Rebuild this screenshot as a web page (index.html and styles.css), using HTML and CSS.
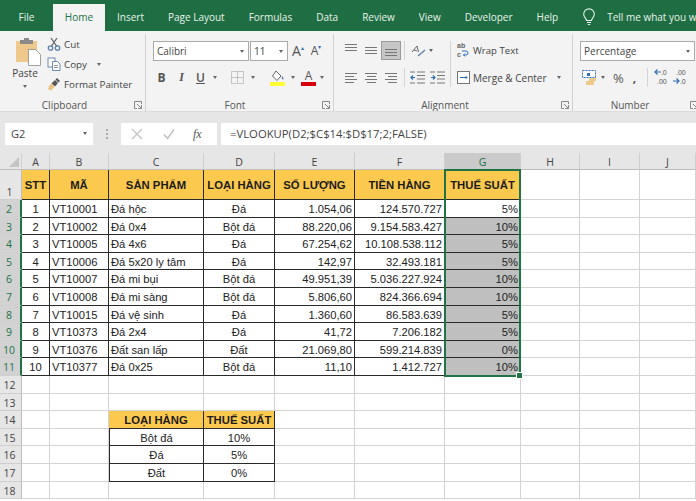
FILE: index.html
```html
<!DOCTYPE html>
<html lang="vi">
<head>
    <meta charset="UTF-8">
    <title>Excel - VLOOKUP</title>
    <link rel="stylesheet" href="styles.css">
</head>
<body>
    <!-- Tabs -->
    <div class="tabs">
        <a class="tab file">File</a>
        <a class="tab active">Home</a>
        <a class="tab">Insert</a>
        <a class="tab">Page Layout</a>
        <a class="tab">Formulas</a>
        <a class="tab">Data</a>
        <a class="tab">Review</a>
        <a class="tab">View</a>
        <a class="tab">Developer</a>
        <a class="tab">Help</a>
        <svg class="bulb" width="14" height="18" viewBox="0 0 14 18" fill="none" stroke="#e8f2ec" stroke-width="1.1"><path d="M4.500 12.500c0-2-2.800-3-2.800-6.300a5.300 5.300 0 0 1 10.600 0c0 3.300-2.800 4.300-2.800 6.300z"/><path d="M5 14.500h4M5.800 16.500h2.400"/></svg>
        <span class="tell">Tell me what you want to do</span>
    </div>

    <!-- Ribbon -->
    <div class="ribbon">
        <section class="group clipboard">
            <div class="group-body clip-body">
                <div class="paste">
                    <svg width="27" height="28" viewBox="0 0 27 28"><rect x="1" y="3" width="21" height="21" fill="#eec98b"/><rect x="5" y="2" width="13" height="4" fill="#8a8a8a"/><rect x="9" y="0" width="5" height="3" fill="#8a8a8a"/><path d="M13.500 11.500h7l5 5v11h-12z" fill="#fff" stroke="#8a8a8a" stroke-width=".8"/></svg>
                    <span>Paste</span>
                    <i class="caret"></i>
                </div>
                <div class="clip-list">
                    <div class="clip-item">
                        <svg width="14" height="14" viewBox="0 0 14 14" fill="none" stroke="#5b7fa8" stroke-width="1.300"><circle cx="3.500" cy="11" r="2.200"/><circle cx="10.500" cy="11" r="2.200"/><path d="M4.500 9 10 1M9.500 9 4 1" stroke="#666"/></svg>
                        <span>Cut</span>
                    </div>
                    <div class="clip-item">
                        <svg width="14" height="14" viewBox="0 0 14 14" fill="#fff" stroke="#5b7fa8" stroke-width=".9"><rect x="1" y="1" width="7" height="9"/><path d="M5.500 4.500h5l2.500 2.500v6.500h-7.500z"/><path d="M7 8.500h4M7 10.500h4" stroke="#888"/></svg>
                        <span>Copy</span>
                        <i class="caret copy-caret"></i>
                    </div>
                    <div class="clip-item">
                        <svg width="14" height="14" viewBox="0 0 14 14"><path d="M8 3l3 3-3 3.500-3.500-3z" fill="#555"/><path d="M10 1l3 3-1.500 1.500-3-3z" fill="#555"/><path d="M4.500 6.500l3 3.500-3.500 3.500-3.500-1.500 2-1.500-1.500-.5z" fill="#e8c27d"/></svg>
                        <span>Format Painter</span>
                    </div>
                </div>
            </div>
            <div class="group-name">Clipboard<svg class="launcher" width="8" height="8" viewBox="0 0 8 8" fill="none" stroke="#888"><path d="M7.500 3V.5H.5v7H3M3 3l4.500 4.500M4 7.500h3.500V4"/></svg></div>
        </section>

        <section class="group font">
            <div class="group-body">
                <div class="tool-row">
                    <div class="select font-name">Calibri<i class="caret"></i></div>
                    <div class="select font-size">11<i class="caret"></i></div>
                    <span class="grow-a big">A<sup>▴</sup></span>
                    <span class="grow-a small">A<sup>▾</sup></span>
                </div>
                <div class="tool-row second">
                    <span class="fmt bold">B</span>
                    <span class="fmt italic">I</span>
                    <span class="fmt under">U</span>
                    <i class="caret u-caret"></i>
                    <svg class="borders" width="13" height="13" viewBox="0 0 13 13" fill="none" stroke="#999" stroke-dasharray="1 1"><path d="M.5.500h12v12H.5zM6.500.500v12M.5 6.500h12"/></svg>
                    <i class="caret b-caret"></i>
                    <svg class="fill-icon" width="16" height="16" viewBox="0 0 16 16"><path d="M6 1l5 5-4 4.500-4.500-4.500z" fill="#fff" stroke="#666"/><path d="M12 6c1.500 1.500 2 3 1 3.500s-1.500-1.500-1-3.500z" fill="#5b7fa8"/><rect x="0" y="12" width="15" height="4" fill="#ffff33"/></svg>
                    <i class="caret f-caret"></i>
                    <div class="color-a">A</div>
                    <i class="caret a-caret"></i>
                </div>
            </div>
            <div class="group-name">Font<svg class="launcher" width="8" height="8" viewBox="0 0 8 8" fill="none" stroke="#888"><path d="M7.500 3V.5H.5v7H3M3 3l4.500 4.500M4 7.500h3.500V4"/></svg></div>
        </section>

        <section class="group alignment">
            <div class="group-body align-body">
                <div class="align-left">
                    <div class="tool-row">
                        <span class="lines v-top"><b></b><b></b><b></b></span>
                        <span class="lines v-mid"><b></b><b></b><b></b></span>
                        <span class="lines v-bot on"><b></b><b></b><b></b></span>
                        <i class="sep"></i>
                        <svg class="orient" width="15" height="15" viewBox="0 0 15 15" fill="none" stroke="#666"><path d="M1 9l5-6 1.500 6M3 7l3 1"/><path d="M7 13l7-6" stroke="#5b7fa8" stroke-width="1.300"/></svg>
                        <i class="caret"></i>
                    </div>
                    <div class="tool-row second">
                        <span class="lines a-left"><b></b><b></b><b></b><b></b></span>
                        <span class="lines a-center"><b></b><b></b><b></b><b></b></span>
                        <span class="lines a-right"><b></b><b></b><b></b><b></b></span>
                        <i class="sep"></i>
                        <svg class="indent" width="15" height="13" viewBox="0 0 15 13" fill="none" stroke="#777"><path d="M7 1h8M7 4.500h8M7 8h8M7 12h8M0 12h5M0 1h5"/><path d="M5 6.500H1M3 4.500l-2 2 2 2" stroke="#2f6fb4" stroke-width="1.200"/></svg>
                        <svg class="indent" width="15" height="13" viewBox="0 0 15 13" fill="none" stroke="#777"><path d="M7 1h8M7 4.500h8M7 8h8M7 12h8M0 12h5M0 1h5"/><path d="M1 6.500h4M3 4.500l2 2-2 2" stroke="#2f6fb4" stroke-width="1.200"/></svg>
                    </div>
                </div>
                <div class="align-right">
                    <div class="wide-item">
                        <span class="wrap-icon">ab<br>c<svg width="7" height="7" viewBox="0 0 7 7" fill="none" stroke="#2f6fb4"><path d="M0 1h4a2 2 0 0 1 0 4H1.500M3 3.500 1.500 5 3 6.500"/></svg></span>
                        <span>Wrap Text</span>
                    </div>
                    <div class="wide-item merge">
                        <svg width="13" height="13" viewBox="0 0 13 13" fill="#fff" stroke="#777"><rect x=".5" y=".5" width="12" height="12"/><path d="M3 6.500h7M8.500 5l1.500 1.500L8.500 8" stroke="#2f6fb4"/></svg>
                        <span>Merge &amp; Center</span>
                        <i class="caret"></i>
                    </div>
                </div>
            </div>
            <div class="group-name">Alignment<svg class="launcher" width="8" height="8" viewBox="0 0 8 8" fill="none" stroke="#888"><path d="M7.500 3V.5H.5v7H3M3 3l4.500 4.500M4 7.500h3.500V4"/></svg></div>
        </section>

        <section class="group number">
            <div class="group-body">
                <div class="tool-row">
                    <div class="select percent">Percentage<i class="caret"></i></div>
                </div>
                <div class="tool-row second">
                    <svg class="acct" width="16" height="15" viewBox="0 0 16 15"><rect x=".5" y=".5" width="13" height="7" fill="#fff" stroke="#2f6fb4" stroke-dasharray="2 1"/><rect x="5" y="3" width="3" height="3" fill="#2f6fb4"/><rect x="7" y="8" width="7" height="3" fill="#eec98b"/><rect x="4" y="11" width="8" height="4" fill="#eec98b"/></svg>
                    <i class="caret"></i>
                    <span class="pct">%</span>
                    <span class="comma">,</span>
                    <i class="sep num-sep"></i>
                    <span class="dec">
                        <em><svg width="7" height="6" viewBox="0 0 7 6" fill="none" stroke="#2f6fb4" stroke-width="1.200"><path d="M7 3H1M3.500.5 1 3l2.500 2.500"/></svg>.0</em>
                        <em>.00</em>
                    </span>
                    <span class="dec">
                        <em>.00</em>
                        <em><svg width="7" height="6" viewBox="0 0 7 6" fill="none" stroke="#2f6fb4" stroke-width="1.200"><path d="M0 3h6M3.500.5 6 3 3.500 5.500"/></svg>.0</em>
                    </span>
                </div>
            </div>
            <div class="group-name">Number<svg class="launcher" width="8" height="8" viewBox="0 0 8 8" fill="none" stroke="#888"><path d="M7.500 3V.5H.5v7H3M3 3l4.500 4.500M4 7.500h3.500V4"/></svg></div>
        </section>
    </div>

    <!-- Formula bar -->
    <div class="formula-bar">
        <div class="name-box">G2<i class="caret"></i></div>
        <div class="dots"></div>
        <div class="fx-box">
            <svg class="fx-btn" width="12" height="12" viewBox="0 0 12 12" stroke="#c4c4c4" stroke-width="1.400"><path d="M1 1l10 10M11 1L1 11"/></svg>
            <svg class="fx-btn" width="12" height="12" viewBox="0 0 12 12" fill="none" stroke="#c4c4c4" stroke-width="1.600"><path d="M1 6.500l3.500 4L11 1.500"/></svg>
            <span class="fx">fx</span>
        </div>
        <div class="formula">=VLOOKUP(D2;$C$14:$D$17;2;FALSE)</div>
    </div>

    <!-- Sheet -->
    <div class="sheet">
        <div class="h corner"></div><div class="h">A</div><div class="h">B</div><div class="h">C</div><div class="h">D</div><div class="h">E</div><div class="h">F</div><div class="h sel">G</div><div class="h">H</div><div class="h">I</div><div class="h">J</div>

        <div class="r first">1</div><div class="c th">STT</div><div class="c th">MÃ</div><div class="c th">SẢN PHẨM</div><div class="c th">LOẠI HÀNG</div><div class="c th">SỐ LƯỢNG</div><div class="c th">TIỀN HÀNG</div><div class="c th">THUẾ SUẤT</div><div class="c"></div><div class="c"></div><div class="c"></div>

        <div class="r sel">2</div><div class="c b ctr">1</div><div class="c b">VT10001</div><div class="c b">Đá hộc</div><div class="c b ctr">Đá</div><div class="c b num">1.054,06</div><div class="c b num">124.570.727</div><div class="c b num">5%</div><div class="c"></div><div class="c"></div><div class="c"></div>
        <div class="r sel">3</div><div class="c b ctr">2</div><div class="c b">VT10002</div><div class="c b">Đá 0x4</div><div class="c b ctr">Bột đá</div><div class="c b num">88.220,06</div><div class="c b num">9.154.583.427</div><div class="c b num gray">10%</div><div class="c"></div><div class="c"></div><div class="c"></div>
        <div class="r sel">4</div><div class="c b ctr">3</div><div class="c b">VT10005</div><div class="c b">Đá 4x6</div><div class="c b ctr">Đá</div><div class="c b num">67.254,62</div><div class="c b num">10.108.538.112</div><div class="c b num gray">5%</div><div class="c"></div><div class="c"></div><div class="c"></div>
        <div class="r sel">5</div><div class="c b ctr">4</div><div class="c b">VT10006</div><div class="c b">Đá 5x20 ly tâm</div><div class="c b ctr">Đá</div><div class="c b num">142,97</div><div class="c b num">32.493.181</div><div class="c b num gray">5%</div><div class="c"></div><div class="c"></div><div class="c"></div>
        <div class="r sel">6</div><div class="c b ctr">5</div><div class="c b">VT10007</div><div class="c b">Đá mi bụi</div><div class="c b ctr">Bột đá</div><div class="c b num">49.951,39</div><div class="c b num">5.036.227.924</div><div class="c b num gray">10%</div><div class="c"></div><div class="c"></div><div class="c"></div>
        <div class="r sel">7</div><div class="c b ctr">6</div><div class="c b">VT10008</div><div class="c b">Đá mi sàng</div><div class="c b ctr">Bột đá</div><div class="c b num">5.806,60</div><div class="c b num">824.366.694</div><div class="c b num gray">10%</div><div class="c"></div><div class="c"></div><div class="c"></div>
        <div class="r sel">8</div><div class="c b ctr">7</div><div class="c b">VT10015</div><div class="c b">Đá vệ sinh</div><div class="c b ctr">Đá</div><div class="c b num">1.360,60</div><div class="c b num">86.583.639</div><div class="c b num gray">5%</div><div class="c"></div><div class="c"></div><div class="c"></div>
        <div class="r sel">9</div><div class="c b ctr">8</div><div class="c b">VT10373</div><div class="c b">Đá 2x4</div><div class="c b ctr">Đá</div><div class="c b num">41,72</div><div class="c b num">7.206.182</div><div class="c b num gray">5%</div><div class="c"></div><div class="c"></div><div class="c"></div>
        <div class="r sel">10</div><div class="c b ctr">9</div><div class="c b">VT10376</div><div class="c b">Đất san lấp</div><div class="c b ctr">Đất</div><div class="c b num">21.069,80</div><div class="c b num">599.214.839</div><div class="c b num gray">0%</div><div class="c"></div><div class="c"></div><div class="c"></div>
        <div class="r sel">11</div><div class="c b ctr">10</div><div class="c b">VT10377</div><div class="c b">Đá 0x25</div><div class="c b ctr">Bột đá</div><div class="c b num">11,10</div><div class="c b num">1.412.727</div><div class="c b num gray">10%</div><div class="c"></div><div class="c"></div><div class="c"></div>

        <div class="r">12</div><div class="c"></div><div class="c"></div><div class="c"></div><div class="c"></div><div class="c"></div><div class="c"></div><div class="c"></div><div class="c"></div><div class="c"></div><div class="c"></div>
        <div class="r">13</div><div class="c"></div><div class="c"></div><div class="c"></div><div class="c"></div><div class="c"></div><div class="c"></div><div class="c"></div><div class="c"></div><div class="c"></div><div class="c"></div>
        <div class="r">14</div><div class="c"></div><div class="c"></div><div class="c th low">LOẠI HÀNG</div><div class="c th low">THUẾ SUẤT</div><div class="c"></div><div class="c"></div><div class="c"></div><div class="c"></div><div class="c"></div><div class="c"></div>
        <div class="r">15</div><div class="c"></div><div class="c"></div><div class="c b ctr lookup">Bột đá</div><div class="c b ctr">10%</div><div class="c"></div><div class="c"></div><div class="c"></div><div class="c"></div><div class="c"></div><div class="c"></div>
        <div class="r">16</div><div class="c"></div><div class="c"></div><div class="c b ctr lookup">Đá</div><div class="c b ctr">5%</div><div class="c"></div><div class="c"></div><div class="c"></div><div class="c"></div><div class="c"></div><div class="c"></div>
        <div class="r">17</div><div class="c"></div><div class="c"></div><div class="c b ctr lookup">Đất</div><div class="c b ctr">0%</div><div class="c"></div><div class="c"></div><div class="c"></div><div class="c"></div><div class="c"></div><div class="c"></div>
        <div class="r">18</div><div class="c"></div><div class="c"></div><div class="c"></div><div class="c"></div><div class="c"></div><div class="c"></div><div class="c"></div><div class="c"></div><div class="c"></div><div class="c"></div>

        <div class="selection"><i class="handle"></i></div>
    </div>
</body>
</html>
```

FILE: styles.css
```css
/* General */
body {
    margin: 0;
    width: 696px;
    height: 501px;
    overflow: hidden;
    background: #fff;
    font-family: "Open Sans", sans-serif;
    font-size: 10px;
    color: #444;
}

.caret {
    display: inline-block;
    flex: none;
    width: 0;
    height: 0;
    border-left: 2.5px solid transparent;
    border-right: 2.5px solid transparent;
    border-top: 3px solid #666;
}

.sep {
    display: block;
    flex: none;
    width: 1px;
    height: 19px;
    background: #d4d4d4;
}

/* Tabs */
.tabs {
    height: 31px;
    box-sizing: border-box;
    padding-top: 4px;
    display: flex;
    background: #1f6e43;
    color: #e8f2ec;
    white-space: nowrap;
    overflow: hidden;
}

.tab {
    flex: none;
    padding: 0 12px;
    line-height: 26px;
}

.tab.file {
    width: 53px;
    padding: 0;
    text-align: center;
}

.tab.active {
    width: 52px;
    padding: 0;
    text-align: center;
    background: #f3f3f3;
    color: #217346;
}

.bulb {
    flex: none;
    margin: 4px 0 0 12px;
}

.tell {
    flex: none;
    margin-left: 11px;
    line-height: 26px;
}

/* Ribbon */
.ribbon {
    height: 80px;
    display: flex;
    background: #f3f3f3;
    overflow: hidden;
}

.group {
    box-sizing: border-box;
    flex: none;
    display: flex;
    flex-direction: column;
    border-right: 1px solid #d2d2d2;
    margin-top: 3px;
    padding-top: 7px;
}

.group-body {
    flex: none;
    height: 56px;
}

.group-name {
    position: relative;
    padding-right: 16px;
    text-align: center;
    line-height: 16px;
    color: #555;
}

.launcher {
    position: absolute;
    right: 3px;
    top: 4px;
}

.number .launcher {
    right: -2px;
}

.tool-row {
    display: flex;
    align-items: center;
    height: 19px;
}

.tool-row.second {
    margin-top: 8px;
}

/* Clipboard */
.clipboard {
    width: 146px;
}

.clip-body {
    display: flex;
}

.paste {
    box-sizing: border-box;
    width: 46px;
    margin-top: -3px;
    padding-left: 4px;
    text-align: center;
    display: flex;
    flex-direction: column;
    align-items: center;
}

.paste svg {
    margin-left: 6px;
}

.paste span {
    line-height: 14px;
}

.paste .caret {
    margin-top: 5px;
}

.clip-list {
    margin-top: -7px;
}

.clip-item {
    display: flex;
    align-items: center;
    gap: 3px;
    height: 20px;
    margin-left: 1px;
    font-size: 9.8px;
}

.copy-caret {
    margin-left: 7px;
}

/* Font */
.font {
    width: 188px;
    padding-left: 7px;
}

.select {
    box-sizing: border-box;
    height: 20px;
    line-height: 18px;
    background: #fff;
    border: 1px solid #aaa;
    padding-left: 3px;
    position: relative;
    color: #444;
}

.select .caret {
    position: absolute;
    right: 4px;
    top: 8px;
}

.font-name {
    width: 96px;
}

.font-size {
    width: 38px;
    margin-left: 1px;
}

.grow-a {
    font-size: 14px;
    color: #555;
    line-height: 18px;
}

.grow-a sup {
    font-size: 6px;
    color: #2f6fb4;
    vertical-align: 6px;
    line-height: 0;
}

.grow-a.big {
    margin-left: 4px;
}

.grow-a.small {
    margin-left: 7px;
    font-size: 12px;
}

.fmt {
    font-family: "Liberation Serif", serif;
    font-size: 12px;
    width: 19px;
    text-align: center;
    color: #555;
}

.fmt.bold {
    font-family: "Open Sans", sans-serif;
    font-weight: 700;
    margin-left: -1px;
}

.fmt.italic {
    font-style: italic;
    font-weight: 700;
    margin-left: 1px;
}

.fmt.under {
    font-family: "Open Sans", sans-serif;
    font-weight: 600;
    text-decoration: underline;
}

.u-caret {
    margin-left: 3px;
}

.borders {
    margin-left: 14px;
}

.b-caret {
    margin-left: 7px;
}

.fill-icon {
    margin-left: 15px;
}

.f-caret {
    margin-left: 5px;
}

.color-a {
    box-sizing: border-box;
    width: 15px;
    height: 16px;
    margin-left: 6px;
    text-align: center;
    font-size: 12px;
    line-height: 12px;
    border-bottom: 4px solid #d9000d;
    color: #555;
}

.a-caret {
    margin-left: 4px;
}

/* Alignment */
.alignment {
    width: 239px;
}

.align-body {
    display: flex;
}

.align-left {
    width: 117px;
    padding-left: 7px;
    box-sizing: border-box;
    border-right: 1px solid #d4d4d4;
    height: 46px;
}

.lines {
    box-sizing: border-box;
    flex: none;
    width: 20px;
    height: 19px;
    display: flex;
    flex-direction: column;
    align-items: center;
    gap: 2px;
    justify-content: center;
}

.lines b {
    display: block;
    width: 12px;
    height: 1px;
    background: #777;
}

.v-top {
    justify-content: flex-start;
    padding-top: 3px;
}

.v-bot {
    justify-content: flex-end;
    padding-bottom: 3px;
}

.lines.on {
    background: #c6c6c6;
    border: 1px solid #9a9a9a;
}

.a-left {
    align-items: flex-start;
    padding-left: 4px;
}

.a-right {
    align-items: flex-end;
    padding-right: 4px;
}

.a-left b:nth-child(even),
.a-center b:nth-child(even),
.a-right b:nth-child(even) {
    width: 9px;
}

.alignment .sep {
    margin-left: 3px;
}

.orient {
    margin-left: 6px;
    margin-right: 3px;
}

.indent {
    margin-left: 5px;
}

.align-right {
    padding-left: 6px;
}

.wide-item {
    display: flex;
    align-items: center;
    gap: 3px;
    height: 19px;
    font-size: 9.6px;
}

.wide-item.merge {
    margin-top: 8px;
    font-size: 10px;
}

.wide-item .caret {
    margin-left: 7px;
}

.wrap-icon {
    width: 13px;
    font-family: "Liberation Sans", sans-serif;
    font-size: 7px;
    line-height: 8.5px;
    font-weight: 700;
    color: #666;
}

.wrap-icon svg {
    margin-left: 1px;
}

/* Number */
.number {
    flex: 1;
    border-right: 0;
    padding-left: 7px;
}

.percent {
    width: 115px;
}

.acct {
    margin-left: 2px;
    flex: none;
}

.number .tool-row.second > .caret {
    margin-left: 3px;
}

.pct {
    margin-left: 8px;
    font-size: 13px;
    color: #555;
}

.comma {
    margin-left: 9px;
    width: 6px;
    font-size: 12px;
    font-weight: 700;
    line-height: 10px;
    color: #555;
}

.num-sep {
    margin-left: 8px;
}

.dec {
    width: 14px;
    margin-left: 5px;
    font-family: "Liberation Sans", sans-serif;
    font-size: 7px;
    line-height: 8.5px;
    text-align: right;
    color: #555;
}

.dec em {
    display: block;
    font-style: normal;
    white-space: nowrap;
}

/* Formula bar */
.formula-bar {
    height: 42px;
    box-sizing: border-box;
    padding: 11px 0 9px 5px;
    display: flex;
    background: #e6e6e6;
    border-top: 1px solid #dcdcdc;
}

.name-box,
.fx-box,
.formula {
    background: #fff;
    height: 22px;
    line-height: 22px;
    box-sizing: border-box;
}

.name-box {
    position: relative;
    flex: none;
    width: 88px;
    padding-left: 6px;
    font-size: 11px;
}

.name-box .caret {
    position: absolute;
    right: 6px;
    top: 9px;
}

.dots {
    flex: none;
    width: 2px;
    height: 10px;
    margin: 6px 13px 0;
    border-left: 2px dotted #aaa;
    box-sizing: border-box;
}

.fx-box {
    flex: none;
    width: 96px;
    margin-right: 4px;
    display: flex;
    align-items: center;
    padding-left: 10px;
    gap: 20px;
}

.fx {
    color: #555;
    font-family: "Liberation Serif", serif;
    font-style: italic;
    font-size: 12px;
    margin-left: -2px;
}

.formula {
    flex: 1;
    padding-left: 9px;
    font-size: 11.3px;
    color: #444;
}

/* Sheet */
.sheet {
    position: relative;
    display: grid;
    grid-template-columns: 22px 28px 59px 95px 71px 80px 90px 76px 59px 60px 56px;
    grid-template-rows: 17px 30px repeat(17, 17.6px);
    font-family: "Liberation Sans", Arial, sans-serif;
    font-size: 11.2px;
    color: #222;
}

.h {
    box-sizing: border-box;
    background: #e6e6e6;
    border-right: 1px solid #cfcfcf;
    border-bottom: 1px solid #bdbdbd;
    text-align: center;
    line-height: 18px;
    font-family: "Open Sans", sans-serif;
    font-size: 10.5px;
    color: #444;
}

.h.corner {
    position: relative;
}

.h.corner::after {
    content: "";
    position: absolute;
    right: 2px;
    bottom: 2px;
    border-left: 10px solid transparent;
    border-bottom: 10px solid #c4c4c4;
}

.h.sel {
    background: #cacaca;
    color: #217346;
}

.r {
    box-sizing: border-box;
    background: #e6e6e6;
    border-right: 1px solid #bdbdbd;
    border-bottom: 1px solid #cfcfcf;
    text-align: center;
    padding-right: 2px;
    line-height: 19px;
    font-family: "Open Sans", sans-serif;
    font-size: 10.5px;
    color: #444;
}

.r.first {
    line-height: 44px;
}

.r.sel {
    background: #d2d2d2;
    color: #217346;
    border-right: 2px solid #217346;
}

.c {
    box-sizing: border-box;
    border-right: 1px solid #d4d4d4;
    border-bottom: 1px solid #d4d4d4;
    line-height: 18px;
    padding: 0 2px;
    white-space: nowrap;
    overflow: hidden;
}

.c.b {
    border-right-color: #2a2a2a;
    border-bottom-color: #2a2a2a;
}

.c.ctr {
    text-align: center;
}

.c.num {
    text-align: right;
}

.c.gray {
    background: #bfbfbf;
}

.c.lookup {
    border-left: 1px solid #2a2a2a;
}

.c.th {
    background: #fcc94f;
    border-right: 1px solid #2a2a2a;
    border-bottom: 1px solid #2a2a2a;
    text-align: center;
    font-weight: 700;
    font-size: 11.3px;
    line-height: 30px;
    padding: 0;
    color: #1c1c1c;
}

.c.th.low {
    line-height: 18px;
}

/* Selected range, drawn over the cells */
.selection {
    position: absolute;
    left: 444px;
    top: 16px;
    width: 77px;
    height: 208px;
    box-sizing: border-box;
    border: 2px solid #217346;
}

.handle {
    position: absolute;
    right: -4px;
    bottom: -4px;
    width: 5px;
    height: 5px;
    background: #217346;
    border: 1px solid #fff;
}
```
